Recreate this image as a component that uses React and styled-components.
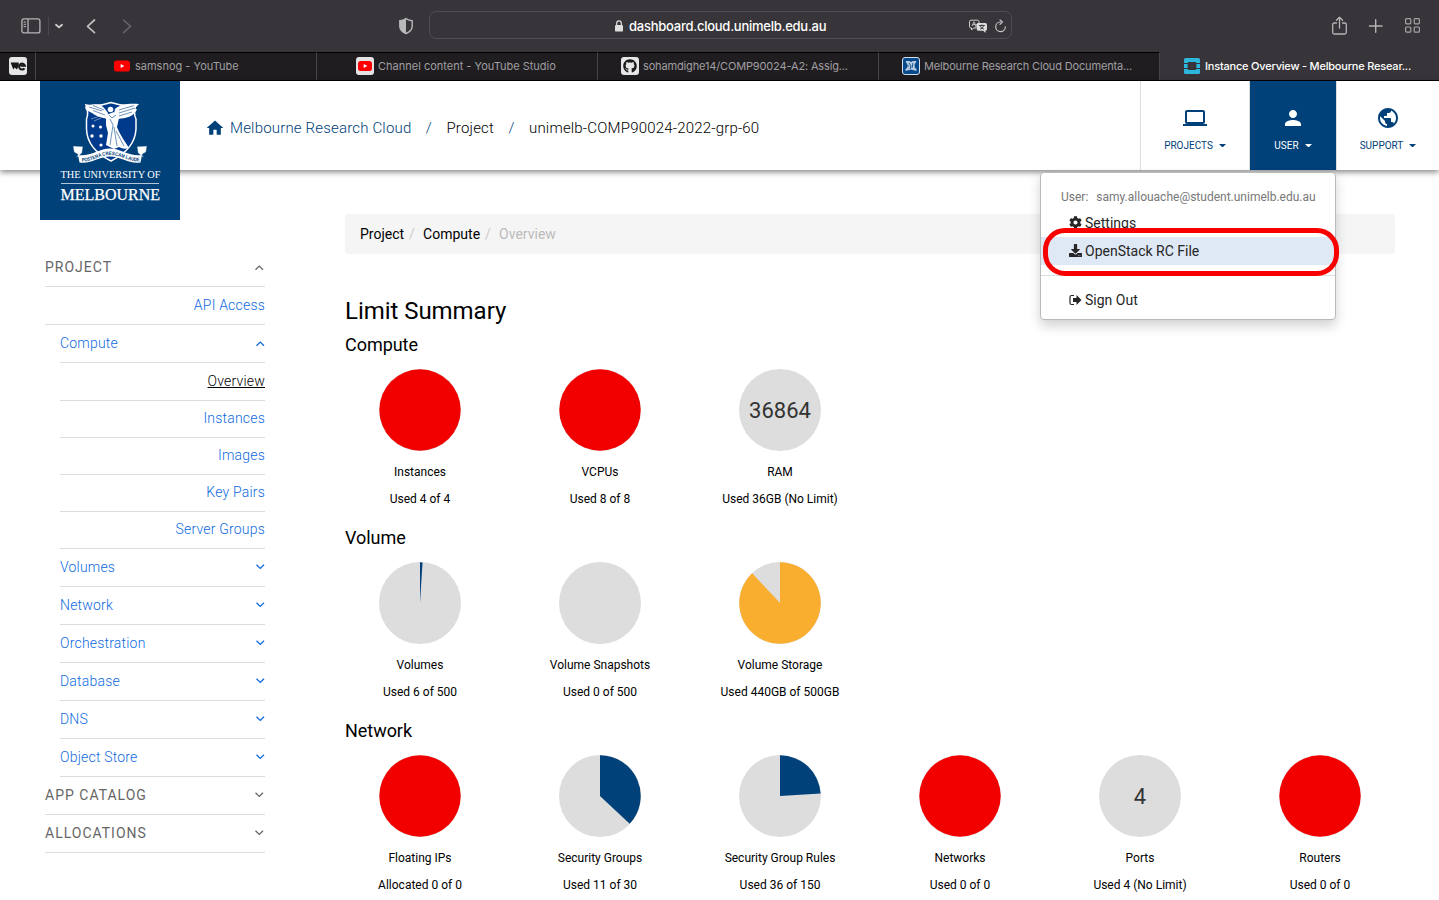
import React from "react";
import styled, { createGlobalStyle, css } from "styled-components";
import { MdHome, MdLaptop, MdPerson, MdPublic } from "react-icons/md";
import { FaCog, FaDownload, FaGithub } from "react-icons/fa";

const NAVY = "#00417a";

const Global = createGlobalStyle`
  *, *::before, *::after { box-sizing: border-box; }
  body { margin: 0; background: #fff; overflow: hidden; font-family: Roboto, "Liberation Sans", sans-serif; color: #000; }
`;

const Window = styled.div`
  width: 1439px;
  height: 900px;
  overflow: hidden;
  display: flex;
  flex-direction: column;
`;

/* ---------- browser chrome ---------- */
const Toolbar = styled.div`
  flex: none;
  height: 52px;
  background: #373539;
  display: flex;
  align-items: center;
  font-family: Inter, sans-serif;
  svg { display: block; flex: none; }
`;
const ToolGroup = styled.div`
  display: flex;
  align-items: center;
  width: ${(p) => p.$w}px;
  padding: 0 0 1px ${(p) => p.$pl || 0}px;
`;
const ToolSep = styled.i`
  width: 1px;
  height: 18px;
  margin: 0 5px 0 7px;
  background: #4b494e;
`;
const AddressBar = styled.div`
  width: 583px;
  height: 28px;
  margin-top: -2px;
  border: 1px solid #504e53;
  border-radius: 7px;
  display: flex;
  align-items: center;
  padding: 2px 4px 0 184px;
`;
const Address = styled.span`
  color: #fff;
  font-size: 13px;
  font-weight: 500;
  letter-spacing: -0.25px;
  margin-left: 5px;
  flex: 1;
  white-space: nowrap;
`;
const AddressTools = styled.div`
  display: flex;
  gap: 6px;
  align-items: center;
`;
const TabBar = styled.div`
  flex: none;
  height: 29px;
  display: flex;
  background: #1f1d20;
  border-bottom: 1px solid #000;
  font-family: Inter, sans-serif;
`;
const Tab = styled.div`
  width: ${(p) => p.$w || 281}px;
  flex: none;
  display: flex;
  align-items: center;
  gap: ${(p) => p.$gap || 4}px;
  padding: 0 0 1px ${(p) => p.$pl}px;
  border-top: 1px solid ${(p) => (p.$active ? "#373539" : "#000")};
  border-right: ${(p) => (p.$active ? 0 : 1)}px solid #48464a;
  background: ${(p) => (p.$active ? "#373539" : "#1f1d20")};
  color: ${(p) => (p.$active ? "#fff" : "#a09fa1")};
  font-size: 11px;
  font-weight: ${(p) => (p.$active ? 500 : 400)};
  letter-spacing: ${(p) => p.$ls || 0}px;
  white-space: nowrap;
  svg { flex: none; display: block; }
`;

/* ---------- site header ---------- */
const Header = styled.header`
  flex: none;
  height: 89px;
  position: relative;
  z-index: 2;
  display: flex;
  background: #fff;
  box-shadow: 0 2px 6px rgba(0, 0, 0, 0.5);
`;
const Logo = styled.div`
  width: 140px;
  height: 139px;
  margin-left: 40px;
  flex: none;
  background: ${NAVY};
  svg { display: block; }
`;
const Trail = styled.nav`
  flex: 1;
  display: flex;
  align-items: center;
  padding: 5px 0 0 25px;
  font-size: 15px;
  font-weight: 300;
  letter-spacing: 0.18px;
  color: #000;
  white-space: nowrap;
  svg { color: ${NAVY}; margin-right: 5px; }
`;
const TrailLink = styled.span`
  color: ${NAVY};
`;
const Slash = styled.span`
  color: ${NAVY};
  width: 35px;
  text-align: center;
`;
const NavButton = styled.div`
  width: ${(p) => p.$w}px;
  flex: none;
  display: flex;
  flex-direction: column;
  align-items: center;
  padding-top: 25px;
  border-left: 1px solid #ddd;
  background: ${(p) => (p.$active ? NAVY : "#fff")};
  color: ${(p) => (p.$active ? "#fff" : NAVY)};
  font-size: 10px;
`;
const NavLabel = styled.div`
  display: flex;
  align-items: center;
  gap: 6px;
  margin-top: 10px;
  line-height: 12px;
`;
const Caret = styled.i`
  border: 3.5px solid transparent;
  border-top-color: currentColor;
  border-bottom: 0;
  border-width: 3px 3.5px 0;
  margin-bottom: 1px;
  width: 7px;
`;

/* ---------- user menu ---------- */
const Menu = styled.div`
  position: absolute;
  left: 1040px;
  top: 91px;
  width: 296px;
  height: 148px;
  background: #fff;
  border: 1px solid #b9b9b9;
  border-radius: 4px;
  box-shadow: 0 6px 12px rgba(0, 0, 0, 0.18);
  padding-top: 17px;
  color: #262626;
  font-size: 14px;
`;
const MenuUser = styled.div`
  height: 19px;
  display: flex;
  gap: 8px;
  padding-left: 20px;
  line-height: 14px;
  font-size: 12px;
  color: #777;
  white-space: nowrap;
`;
const MenuItem = styled.div`
  height: 28px;
  display: flex;
  align-items: center;
  gap: 3px;
  padding-left: 28px;
  background: ${(p) => (p.$active ? "#dfe8f5" : "transparent")};
  svg { margin-top: -1px; }
`;
const MenuRule = styled.div`
  height: 1px;
  margin: 10px 0;
  background: #ddd;
`;
const Highlight = styled.div`
  position: absolute;
  left: 2px;
  top: 55px;
  width: 296px;
  height: 48px;
  border: 5px solid #f80000;
  border-radius: 22px;
`;

/* ---------- body ---------- */
const Body = styled.div`
  flex: 1;
  display: flex;
`;
const Side = styled.aside`
  width: 220px;
  flex: none;
  margin: 79px 80px 0 45px;
`;
const SideRow = styled.div`
  height: ${(p) => p.$h || 38}px;
  margin-left: ${(p) => (p.$inset ? 15 : 0)}px;
  padding-bottom: 2px;
  display: flex;
  align-items: center;
  justify-content: ${(p) => (p.$right ? "flex-end" : "space-between")};
  border-bottom: 1px solid #ddd;
  font-size: 14px;
  font-weight: 300;
  letter-spacing: 0.2px;
  color: #0f6be0;
  ${(p) => p.$top && css`color: #666; font-weight: 400; letter-spacing: 1px; svg { margin-right: 1px; }`}
  ${(p) => p.$current && css`color: #000; span { text-decoration: underline; }`}
`;
const Main = styled.main`
  width: 1050px;
  padding-top: 44px;
`;
const Crumbs = styled.div`
  height: 40px;
  display: flex;
  align-items: center;
  padding-left: 15px;
  border-radius: 4px;
  background: #f5f5f5;
  font-size: 14px;
  i { font-style: normal; color: #ccc; width: 19px; padding-left: 5px; }
  em { font-style: normal; color: #bbb; }
`;
const Title = styled.h1`
  margin: 42px 0 0;
  font-size: 24px;
  line-height: 30px;
  font-weight: 400;
  letter-spacing: -0.04px;
`;
const Section = styled.section`
  height: 193px;
`;
const SectionTitle = styled.h2`
  margin: 0;
  padding-top: 9px;
  height: 43px;
  font-size: 18px;
  line-height: 20px;
  font-weight: 400;
  letter-spacing: -0.04px;
`;
const Quotas = styled.div`
  display: flex;
  gap: 30px;
`;
const Quota = styled.div`
  width: 150px;
  display: flex;
  flex-direction: column;
  align-items: center;
  font-size: 12px;
  white-space: nowrap;
`;
const QuotaLine = styled.div`
  line-height: 17px;
  margin-top: ${(p) => p.$mt}px;
`;
const PieWrap = styled.div`
  width: 82px;
  height: 82px;
  display: grid;
  place-items: center;
  font-size: 22px;
  color: #333;
  > * { grid-area: 1 / 1; }
  span { padding-top: 1px; }
`;

const Pie = ({ part, color = NAVY, text }) => {
  const a = part * 2 * Math.PI;
  const r = 40.7;
  return (
    <PieWrap>
      <svg width="82" height="82" viewBox="0 0 82 82">
        <circle cx="41" cy="41" r="41" fill="#ddd" />
        {part >= 1 && <circle cx="41" cy="41" r={r} fill={color} />}
        {part > 0 && part < 1 && (
          <path
            d={`M41 41V${41 - r}A${r} ${r} 0 ${part > 0.5 ? 1 : 0} 1 ${41 + r * Math.sin(a)} ${41 - r * Math.cos(a)}Z`}
            fill={color}
          />
        )}
      </svg>
      {text && <span>{text}</span>}
    </PieWrap>
  );
};

const Chevron = ({ up }) => (
  <svg width="10" height="8" viewBox="0 0 10 8" fill="none" stroke="currentColor" strokeWidth="1.3">
    <path d={up ? "M1.5 6.8L5.3 3.1L9 6.8" : "M1.5 1.7L5.3 5.4L9 1.7"} />
  </svg>
);

const Crest = () => (
  <svg width="140" height="139" viewBox="0 0 140 139">
    <path d="M46 24Q58 26 71 21.5Q84 26 96 24Q93 32 96 38V48Q95 68 71 80Q47 68 46.500 48V38Q49 32 46 24Z" fill="#003a8c" stroke="#fff" strokeWidth="1.5" />
    <g fill="#fff">
      <path d="M45 26C52 22 61 22 65 28L68 32L67 38C60 36 56 35 52 32L46 29Z" />
      <path d="M99 23C88 22 79 24 75 28L74 33L78 38C86 37 94 36 97 28L94 28Z" />
      <path d="M66 34L74 31L79 37L77 46C80 54 86 62 89 67Q84 69 79 66L74 68L66 64L68 52L66 44Z" />
      <circle cx="70.500" cy="28.500" r="2.800" />
      <circle cx="53" cy="45" r="1.500" />
      <circle cx="60.500" cy="46" r="1.500" />
      <circle cx="52" cy="55" r="1.700" />
      <circle cx="61" cy="55" r="1.700" />
      <circle cx="61" cy="64" r="1.600" />
    </g>
    <path d="M51 38L63 34M54 40L61 37" stroke="#fff" strokeWidth=".7" opacity=".6" />
    <path d="M49 26L62 30M53 24.500L64 29M53 29.500L65 34M79 29L94 24.500M79 32L95 27M79 35L92 31M70 38L73 44L70 64M74 46L77 65M76 50L84 65M69 34L72 37L76 34" stroke="#0d4a8c" strokeWidth=".6" fill="none" />
    <path d="M33 65L43 65.500L42 72L36 77L38 73.500L34 71ZM107 65L97 65.500L98 72L104 77L102 73.500L106 71Z" fill="#fff" stroke={NAVY} strokeWidth=".4" />
    <path d="M38 74C50 76 59 67.500 70 67.500C81 67.500 90 76 102 74L100.500 81.500C88 83 81 75.500 70 75.500C59 75.500 52 83 39.500 81.500Z" fill="#fff" />
    <path id="motto" d="M40.500 80.300C52 81.500 59 74 70 74C81 74 89 81.500 101 80" fill="none" />
    <text fontFamily="Liberation Sans, sans-serif" fontSize="5" fontWeight="700" fill={NAVY}>
      <textPath href="#motto" startOffset="1" textLength="60" lengthAdjust="spacingAndGlyphs">POSTERA CRESCAM LAUDE</textPath>
    </text>
    <g fill="#fff" fontFamily="Liberation Serif, serif">
      <text x="20.500" y="97" fontSize="10.300" textLength="100" lengthAdjust="spacingAndGlyphs">THE UNIVERSITY OF</text>
      <rect x="21" y="102" width="98" height="1" opacity=".7" />
      <text x="20.500" y="118.500" fontSize="16" stroke="#fff" strokeWidth=".25" textLength="99.500" lengthAdjust="spacingAndGlyphs">MELBOURNE</text>
    </g>
  </svg>
);

const YouTube = ({ boxed }) => (
  <svg width={boxed ? 18 : 16} height="18" viewBox={boxed ? "0 0 18 18" : "1 0 16 18"}>
    {boxed && <rect width="18" height="18" rx="3" fill="#e4e4e4" />}
    <rect x={boxed ? 2 : 1} y={boxed ? 4 : 3.5} width={boxed ? 14 : 16} height={boxed ? 10 : 11} rx="2.8" fill="#f00" />
    <path d="M7.700 7L11.300 9L7.700 11Z" fill="#fff" />
  </svg>
);

const project = ["Instances", "Images", "Key Pairs", "Server Groups"];
const groups = ["Volumes", "Network", "Orchestration", "Database", "DNS", "Object Store"];
const sections = [
  ["Compute", [
    { label: "Instances", use: "Used 4 of 4", part: 1, color: "#f20000" },
    { label: "VCPUs", use: "Used 8 of 8", part: 1, color: "#f20000" },
    { label: "RAM", use: "Used 36GB (No Limit)", part: 0, text: "36864" },
  ]],
  ["Volume", [
    { label: "Volumes", use: "Used 6 of 500", part: 0.01 },
    { label: "Volume Snapshots", use: "Used 0 of 500", part: 0 },
    { label: "Volume Storage", use: "Used 440GB of 500GB", part: 0.88, color: "#f9ae2f" },
  ]],
  ["Network", [
    { label: "Floating IPs", use: "Allocated 0 of 0", part: 1, color: "#f20000" },
    { label: "Security Groups", use: "Used 11 of 30", part: 0.37 },
    { label: "Security Group Rules", use: "Used 36 of 150", part: 0.24 },
    { label: "Networks", use: "Used 0 of 0", part: 1, color: "#f20000" },
    { label: "Ports", use: "Used 4 (No Limit)", part: 0, text: "4" },
    { label: "Routers", use: "Used 0 of 0", part: 1, color: "#f20000" },
  ]],
];

const BrowserToolbar = () => (
  <Toolbar>
    <ToolGroup $w={398} $pl={21}>
      <svg width="20" height="16" viewBox="0 0 20 16" fill="none" stroke="#b5b4b7" strokeWidth="1.3">
        <rect x=".9" y=".9" width="18" height="14" rx="2" />
        <path d="M7 1V15" />
        <path d="M2.600 4H5M2.600 6.300H5M2.600 8.600H5" strokeWidth="1" />
      </svg>
      <ToolSep />
      <svg width="10" height="8" viewBox="0 0 10 8" fill="none" stroke="#cfced0" strokeWidth="1.8" strokeLinecap="round" strokeLinejoin="round">
        <path d="M2 2.800L5 5.400L8 2.800" />
      </svg>
      <svg width="52" height="18" viewBox="0 0 52 18" fill="none" stroke="#c0bfc1" strokeWidth="1.7" strokeLinecap="round" strokeLinejoin="round">
        <path d="M30.500 3L23.500 9.300L30.500 15.600" />
      </svg>
      <svg width="18" height="18" viewBox="0 0 18 18" fill="none" stroke="#656368" strokeWidth="1.6" strokeLinecap="round" strokeLinejoin="round">
        <path d="M7.500 3L14.500 9.300L7.500 15.600" />
      </svg>
    </ToolGroup>
    <ToolGroup $w={31}>
      <svg width="16" height="18" viewBox="0 0 16 18">
        <path d="M8 1.700Q11 3.700 14.200 3.700V9.500Q14 14 8 16.500Q2 14 1.800 9.500V3.700Q5 3.700 8 1.700Z" fill="none" stroke="#b9b8bb" strokeWidth="1.4" />
        <path d="M8 1.700Q5 3.700 1.800 3.700V9.500Q2 14 8 16.500Z" fill="#b9b8bb" />
      </svg>
    </ToolGroup>
    <AddressBar>
      <svg width="10" height="12" viewBox="0 0 10 12">
        <rect x="1" y="5" width="8" height="6.6" rx="1.2" fill="#dededf" />
        <path d="M2.700 6V3.200A2.300 2.300 0 0 1 7.300 3.200V6" fill="none" stroke="#dededf" strokeWidth="1.2" />
      </svg>
      <Address>dashboard.cloud.unimelb.edu.au</Address>
      <AddressTools>
        <svg width="20" height="15" viewBox="0 0 20 15">
          <path d="M3 1.200H9.500Q11 1.200 11 2.700V5H9.500Q8 5 8 6.500V9H5.500L3.500 11V9H3Q1.500 9 1.500 7.500V2.700Q1.500 1.200 3 1.200Z" fill="none" stroke="#cfced0" />
          <path d="M4 7L6 2.800L8 7M4.800 5.600H7.200" fill="none" stroke="#cfced0" strokeWidth=".9" />
          <path d="M10.300 4H17.300Q19 4 19 5.700V10Q19 11.700 17.500 11.700V14L15.200 11.700H10.300Q8.700 11.700 8.700 10V5.700Q8.700 4 10.300 4Z" fill="#dcdcdd" />
          <path d="M11 6.500H16.800M13.900 5.400V6.500M12 10.300Q15 9.300 15.800 6.600M12.300 7Q13 9.300 16 10.300" fill="none" stroke="#373539" strokeWidth=".9" />
        </svg>
        <svg width="13" height="14" viewBox="0 0 13 14" fill="none" stroke="#c6c5c8" strokeWidth="1.2" strokeLinecap="round" strokeLinejoin="round">
          <path d="M6.500 3A4.800 4.800 0 1 0 11.300 7.900M6 .9L8.500 3L6 5.400" />
        </svg>
      </AddressTools>
    </AddressBar>
    <ToolGroup $w={427} $pl={319}>
      <svg width="17" height="20" viewBox="0 0 17 20" fill="none" stroke="#b5b4b7" strokeWidth="1.3" strokeLinecap="round" strokeLinejoin="round">
        <path d="M5.500 7H3.200Q1.700 7 1.700 8.500V16.500Q1.700 18 3.200 18H13.800Q15.300 18 15.300 16.500V8.500Q15.300 7 13.800 7H11.500M8.500 12V1.500M5.400 4.300L8.500 1.300L11.600 4.300" />
      </svg>
      <svg width="56" height="16" viewBox="0 0 56 16" fill="none" stroke="#b5b4b7" strokeWidth="1.4" strokeLinecap="round">
        <path d="M21.500 8H34M27.700 1.800V14.200" />
      </svg>
      <svg width="17" height="17" viewBox="0 0 17 17" fill="none" stroke="#a5a4a7" strokeWidth="1.2">
        <rect x="1.6" y="1.6" width="5.2" height="5.2" rx="1" />
        <rect x="10.2" y="1.6" width="5.2" height="5.2" rx="1" />
        <rect x="1.6" y="10" width="5.2" height="5.2" rx="1" />
        <rect x="10.2" y="10" width="5.2" height="5.2" rx="1" />
      </svg>
    </ToolGroup>
  </Toolbar>
);

const BrowserTabs = () => (
  <TabBar>
    <Tab $w={36} $pl={9}>
      <svg width="18" height="18" viewBox="0 0 18 18">
        <rect width="18" height="18" rx="3" fill="#e6e6e6" />
        <path d="M1.600 5.500H9.700V9L7.800 12.500L5.800 10.500L4.300 12.500Z" fill="#17181a" />
        <path d="M15.500 11.400A3 3 0 1 1 16 8.800H11.500" fill="none" stroke="#17181a" strokeWidth="2" />
      </svg>
    </Tab>
    <Tab $pl={78} $gap={5}><YouTube />samsnog - YouTube</Tab>
    <Tab $pl={39}><YouTube boxed />Channel content - YouTube Studio</Tab>
    <Tab $pl={23} $ls={-0.15}>
      <svg width="18" height="18" viewBox="0 0 18 18">
        <rect width="18" height="18" rx="3" fill="#e6e6e6" />
        <g transform="translate(2 2)"><FaGithub size={14} color="#1a1a1a" /></g>
      </svg>
      sohamdighe14/COMP90024-A2: Assig...
    </Tab>
    <Tab $pl={23} $ls={-0.15}>
      <svg width="18" height="18" viewBox="0 0 18 18">
        <rect x=".5" y=".5" width="17" height="17" rx="2.5" fill="#064a8c" stroke="#d9e2ec" />
        <path d="M3.500 4H7L9 5L11 4H14.500L12.500 8L13 11L14.500 12V14L9 12.500L3.500 14V12L5 11L5.500 8Z" fill="#b9cbe0" />
        <path d="M7 6L9 9L8 12M11 6L10 11M6 8V10" stroke="#064a8c" strokeWidth=".9" fill="none" />
      </svg>
      Melbourne Research Cloud Documenta...
    </Tab>
    <Tab $w={279} $pl={24} $gap={5} $ls={-0.21} $active>
      <svg width="16" height="16" viewBox="0 0 16 16" fill="#2db7dc">
        <path d="M1.500 0H14.500Q16 0 16 1.500V5H12V4H4V5H0V1.500Q0 0 1.500 0ZM0 6H3.600V10H0ZM12.400 6H16V10H12.400ZM0 11H4V12H12V11H16V14.500Q16 16 14.500 16H1.500Q0 16 0 14.500Z" />
      </svg>
      Instance Overview - Melbourne Resear...
    </Tab>
  </TabBar>
);

const UserMenu = () => (
  <Menu>
    <MenuUser><span>User:</span><span>samy.allouache@student.unimelb.edu.au</span></MenuUser>
    <MenuItem><FaCog size={13} />Settings</MenuItem>
    <MenuItem $active><FaDownload size={13} />OpenStack RC File</MenuItem>
    <MenuRule />
    <MenuItem>
      <svg width="13" height="12" viewBox="0 0 13 12">
        <path d="M5 1.500H2.500Q1 1.500 1 3V9Q1 10.500 2.500 10.500H5" fill="none" stroke="currentColor" strokeWidth="1.2" />
        <path d="M4 4H7.500V1L12.500 6L7.500 11V8H4Z" fill="currentColor" />
      </svg>
      Sign Out
    </MenuItem>
    <Highlight />
  </Menu>
);

export default function App() {
  return (
    <Window>
      <Global />
      <BrowserToolbar />
      <BrowserTabs />
      <Header>
        <Logo><Crest /></Logo>
        <Trail>
          <MdHome size={20} />
          <TrailLink>Melbourne Research Cloud</TrailLink>
          <Slash>/</Slash>
          <span>Project</span>
          <Slash>/</Slash>
          <span>unimelb-COMP90024-2022-grp-60</span>
        </Trail>
        <NavButton $w={109}><MdLaptop size={24} /><NavLabel>PROJECTS<Caret /></NavLabel></NavButton>
        <NavButton $w={87} $active><MdPerson size={24} /><NavLabel>USER<Caret /></NavLabel></NavButton>
        <NavButton $w={103}><MdPublic size={24} /><NavLabel>SUPPORT<Caret /></NavLabel></NavButton>
        <UserMenu />
      </Header>
      <Body>
        <Side>
          <SideRow $top><span>PROJECT</span><Chevron up /></SideRow>
          <SideRow $right><span>API Access</span></SideRow>
          <SideRow $inset><span>Compute</span><Chevron up /></SideRow>
          <SideRow $inset $right $current><span>Overview</span></SideRow>
          {project.map((t) => <SideRow key={t} $inset $right $h={37}><span>{t}</span></SideRow>)}
          {groups.map((t) => <SideRow key={t} $inset><span>{t}</span><Chevron /></SideRow>)}
          <SideRow $top><span>APP CATALOG</span><Chevron /></SideRow>
          <SideRow $top><span>ALLOCATIONS</span><Chevron /></SideRow>
        </Side>
        <Main>
          <Crumbs>Project<i>/</i>Compute<i>/</i><em>Overview</em></Crumbs>
          <Title>Limit Summary</Title>
          {sections.map(([name, items]) => (
            <Section key={name}>
              <SectionTitle>{name}</SectionTitle>
              <Quotas>
                {items.map((q) => (
                  <Quota key={q.label}>
                    <Pie part={q.part} color={q.color} text={q.text} />
                    <QuotaLine $mt={13}>{q.label}</QuotaLine>
                    <QuotaLine $mt={10}>{q.use}</QuotaLine>
                  </Quota>
                ))}
              </Quotas>
            </Section>
          ))}
        </Main>
      </Body>
    </Window>
  );
}
